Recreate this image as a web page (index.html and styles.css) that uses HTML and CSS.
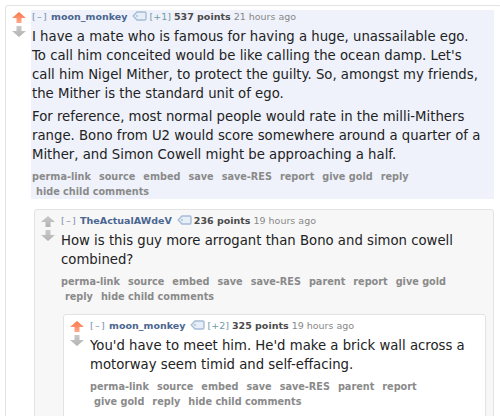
FILE: index.html
```html
<!DOCTYPE html>
<html lang="en">
<head>
<meta charset="utf-8">
<title>Comments</title>
<link rel="stylesheet" href="styles.css">
</head>
<body>
<svg class="defs" width="0" height="0" aria-hidden="true">
  <defs>
    <linearGradient id="gOrange" x1="0" y1="0" x2="0" y2="1">
      <stop offset="0" stop-color="#ff7447"/>
      <stop offset="1" stop-color="#ffa98a"/>
    </linearGradient>
    <linearGradient id="gGrey" x1="0" y1="0" x2="0" y2="1">
      <stop offset="0" stop-color="#c9c9c9"/>
      <stop offset="1" stop-color="#b3b3b3"/>
    </linearGradient>
  </defs>
</svg>

<div class="comment top">
  <div class="midcol">
    <svg class="arrow" viewBox="0 0 14 11"><polygon class="up-on" points="7,0 14,6 9.5,6 9.5,11 4.5,11 4.5,6 0,6"/></svg>
    <svg class="arrow" viewBox="0 0 14 11"><polygon class="off" points="4.5,0 9.5,0 9.5,5 14,5 7,11 0,5 4.5,5"/></svg>
  </div>
  <div class="main">
    <div class="entry highlight">
      <p class="tagline"><span class="expand">[–]</span> <span class="author">moon_monkey</span><svg class="tag" viewBox="0 0 15 10"><path d="M1.2 5 L5 1 H12.8 Q14 1 14 2.2 V7.8 Q14 9 12.8 9 H5 Z"/><circle cx="5" cy="5" r="0.9"/></svg><span class="weight">[+1]</span> <span class="score">537 points</span> <span class="time">21 hours ago</span></p>
      <div class="md">
        <p>I have a mate who is famous for having a huge, unassailable ego. To call him conceited would be like calling the ocean damp. Let's call him Nigel Mither, to protect the guilty. So, amongst my friends, the Mither is the standard unit of ego.</p>
        <p>For reference, most normal people would rate in the milli-Mithers range. Bono from U2 would score somewhere around a quarter of a Mither, and Simon Cowell might be approaching a half.</p>
      </div>
      <ul class="buttons">
        <li>perma-link</li><li>source</li><li>embed</li><li>save</li><li>save-RES</li><li>report</li><li>give gold</li><li>reply</li><li>hide child comments</li>
      </ul>
    </div>

    <div class="child">
      <div class="comment alt">
        <div class="midcol">
          <svg class="arrow" viewBox="0 0 14 11"><polygon class="off" points="7,0 14,6 9.5,6 9.5,11 4.5,11 4.5,6 0,6"/></svg>
          <svg class="arrow" viewBox="0 0 14 11"><polygon class="off" points="4.5,0 9.5,0 9.5,5 14,5 7,11 0,5 4.5,5"/></svg>
        </div>
        <div class="main">
          <div class="entry">
            <p class="tagline"><span class="expand">[–]</span> <span class="author">TheActualAWdeV</span><svg class="tag" viewBox="0 0 15 10"><path d="M1.2 5 L5 1 H12.8 Q14 1 14 2.2 V7.8 Q14 9 12.8 9 H5 Z"/><circle cx="5" cy="5" r="0.9"/></svg><span class="score">236 points</span> <span class="time">19 hours ago</span></p>
            <div class="md">
              <p>How is this guy more arrogant than Bono and simon cowell combined?</p>
            </div>
            <ul class="buttons">
              <li>perma-link</li><li>source</li><li>embed</li><li>save</li><li>save-RES</li><li>parent</li><li>report</li><li>give gold</li><li>reply</li><li>hide child comments</li>
            </ul>
          </div>

          <div class="child">
            <div class="comment">
              <div class="midcol">
                <svg class="arrow" viewBox="0 0 14 11"><polygon class="up-on" points="7,0 14,6 9.5,6 9.5,11 4.5,11 4.5,6 0,6"/></svg>
                <svg class="arrow" viewBox="0 0 14 11"><polygon class="off" points="4.5,0 9.5,0 9.5,5 14,5 7,11 0,5 4.5,5"/></svg>
              </div>
              <div class="main">
                <div class="entry">
                  <p class="tagline"><span class="expand">[–]</span> <span class="author">moon_monkey</span><svg class="tag" viewBox="0 0 15 10"><path d="M1.2 5 L5 1 H12.8 Q14 1 14 2.2 V7.8 Q14 9 12.8 9 H5 Z"/><circle cx="5" cy="5" r="0.9"/></svg><span class="weight">[+2]</span> <span class="score">325 points</span> <span class="time">19 hours ago</span></p>
                  <div class="md">
                    <p>You'd have to meet him. He'd make a brick wall across a motorway seem timid and self-effacing.</p>
                  </div>
                  <ul class="buttons">
                    <li>perma-link</li><li>source</li><li>embed</li><li>save</li><li>save-RES</li><li>parent</li><li>report</li><li>give gold</li><li>reply</li><li>hide child comments</li>
                  </ul>
                </div>
              </div>
            </div>
          </div>
        </div>
      </div>
    </div>
  </div>
</div>
</body>
</html>
```
FILE: styles.css
```css
html, body {
  margin: 0;
  padding: 0;
  background: #ffffff;
  overflow: hidden;
}
body {
  padding: 5px 0 0 5px;
  font-family: "DejaVu Sans", Verdana, sans-serif;
  color: #222222;
}
.defs {
  position: absolute;
  width: 0;
  height: 0;
}
.comment {
  display: flex;
  align-items: flex-start;
  border: 1px solid #e3e3e3;
  border-radius: 3px;
  padding: 4px 7px 10px 6px;
  background: #ffffff;
}
.comment.top {
  width: 497px;
  box-sizing: border-box;
}
.comment.alt {
  background: #f7f7f8;
}
.midcol {
  flex: 0 0 19px;
  display: flex;
  flex-direction: column;
  gap: 3px;
  padding-top: 2px;
}
.arrow {
  display: block;
  width: 14px;
  height: 11px;
}
.up-on {
  fill: url(#gOrange);
}
.off {
  fill: url(#gGrey);
}
.main {
  flex: 1 1 auto;
  min-width: 0;
}
.entry {
  padding: 0 0 0 1px;
}
.entry.highlight {
  background: #eff2fb;
}
.tagline {
  margin: 0;
  font-size: 9.5px;
  line-height: 13px;
  color: #888888;
  white-space: nowrap;
}
.expand {
  color: #7e8fae;
  letter-spacing: 1.3px;
}
.author {
  color: #4a6690;
  font-weight: bold;
}
.tag {
  display: inline-block;
  width: 15px;
  height: 10px;
  margin: 0 2px 0 5px;
  vertical-align: -1px;
}
.tag path {
  fill: #e6eef7;
  stroke: #a7bcd6;
  stroke-width: 1.4;
}
.tag circle {
  fill: #a7bcd6;
}
.weight {
  color: #6f9aa8;
}
.score {
  color: #4a4a4a;
  font-weight: bold;
}
.time {
  color: #888888;
}
.md {
  margin-top: 4px;
  padding-right: 10px;
  font-size: 13.25px;
  line-height: 19px;
  color: #222222;
}
.md p {
  margin: 0 0 4px;
}
.md p:last-child {
  margin-bottom: 0;
}
.buttons {
  list-style: none;
  margin: 5px 0 0;
  padding: 0 8px 0 0;
  font-size: 9.7px;
  line-height: 15px;
  font-weight: bold;
  color: #8a8a8a;
}
.buttons li {
  display: inline-block;
  padding: 0 4px;
}
.buttons li:first-child {
  padding-left: 0;
}
.child {
  margin: 10px 0 0 3px;
}
```
